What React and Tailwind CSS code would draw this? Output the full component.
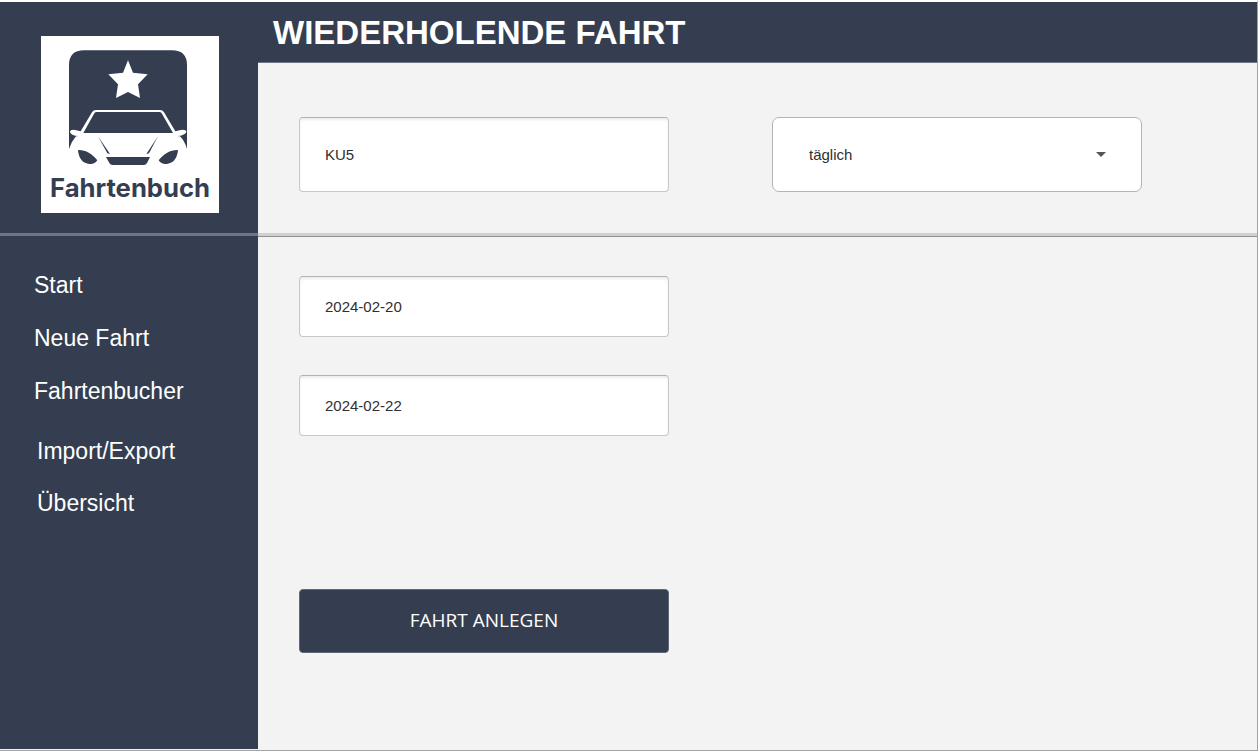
const mainLinks = ['Start', 'Neue Fahrt', 'Fahrtenbucher'];
const dataLinks = ['Import/Export', 'Übersicht'];

const fieldStyle =
  'block w-full rounded-[4px] border border-[#c8c8c8] border-t-[#b2b2b2] bg-white pl-[25px] pr-4 text-[15px] text-[#303030] shadow-[inset_0_2px_3px_rgba(0,0,0,0.08)] outline-none focus:border-[#343e50]';

function Logo() {
  return (
    <svg viewBox="33 33 534 531" className="block h-[177px] w-[178px] bg-white" role="img" aria-label="Fahrtenbuch">
      <path
        d="M117 372V121Q117 76 162 76H426Q471 76 471 121V372L467 360Q459 342 450 334H138Q124 350 117 372Z"
        fill="#343e50"
      />
      <path
        d="M294 106 309 143 353 148 324 178 330 219 294 201 258 219 264 178 235 148 279 143Z"
        fill="#fff"
      />
      <path
        d="M120 319Q122 313 135 315L152 319L186 262Q190 255 198 255H390Q398 255 402 262L436 319L452 315Q467 313 469 319Q469 328 452 332L443 333Q460 346 470 374L466 420H122L118 374Q127 346 145 333L136 332Q120 329 120 319Z"
        fill="#fff"
      />
      <path d="M160 324 193 265Q195 261 200 261H388Q393 261 395 265L429 324Z" fill="#343e50" />
      <path d="M204 334 240 387 232 385Z" fill="#343e50" />
      <path d="M384 334 349 387 357 385Z" fill="#343e50" />
      <path d="M228 396H360L351 414Q348 420 341 420H248Q241 420 238 414Z" fill="#343e50" />
      <path d="M144 375C166 374 186 385 202 406C195 417 185 418 174 416C156 413 146 398 144 375Z" fill="#343e50" />
      <path d="M444 375C422 374 402 385 386 406C393 417 403 418 414 416C432 413 442 398 444 375Z" fill="#343e50" />
      <text x="60" y="515" fontSize="77" fontFamily="Inter, sans-serif" fontWeight="700" fill="#343e50">
        Fahrtenbuch
      </text>
    </svg>
  );
}

function NavLink({ label }) {
  return (
    <li>
      <a href="#" className="block text-[23px] leading-7 text-white hover:underline">
        {label}
      </a>
    </li>
  );
}

export default function App() {
  return (
    <div className="flex min-h-screen border-r border-b border-t-2 border-t-white border-r-[#a3a3a3] border-b-[#a3a3a3] bg-[#f3f3f3] font-['Liberation_Sans',Arial,sans-serif]">
      <aside className="mb-px w-[258px] shrink-0 bg-[#343e50]">
        <div className="flex justify-center border-b-[3px] border-[#6e7588] pt-[34px] pb-5 pl-0.5">
          <Logo />
        </div>
        <nav className="pt-[35px]" aria-label="Hauptmenü">
          <ul className="flex flex-col gap-[25px] pl-[34px]">
            {mainLinks.map((label) => (
              <NavLink key={label} label={label} />
            ))}
          </ul>
          <ul className="mt-8 flex flex-col gap-6 pl-[37px]">
            {dataLinks.map((label) => (
              <NavLink key={label} label={label} />
            ))}
          </ul>
        </nav>
      </aside>

      <main className="min-w-0 flex-1">
        <header className="flex h-[61px] items-center border-b border-[#6e7588] bg-[#343e50] pt-0.5 pl-[15px]">
          <h1 className="text-[33px] font-bold text-white">WIEDERHOLENDE FAHRT</h1>
        </header>

        <form onSubmit={(event) => event.preventDefault()}>
          <div className="border-b border-[#919191]">
            <div className="grid grid-cols-2 gap-[103px] border-b-[3px] border-[#d0d0d0] pt-[54px] pr-[115px] pb-[41px] pl-[41px]">
              <input aria-label="Kennzeichen" defaultValue="KU5" className={`h-[75px] ${fieldStyle}`} />
              <div className="relative">
                <select
                  aria-label="Wiederholung"
                  defaultValue="täglich"
                  className="block h-[75px] w-full appearance-none rounded-[7px] border border-[#b4b4b4] bg-white px-9 pt-0.5 text-[15px] text-[#303030] outline-none focus:border-[#343e50]"
                >
                  <option>täglich</option>
                  <option>wöchentlich</option>
                  <option>monatlich</option>
                </select>
                <svg
                  viewBox="0 0 10 5"
                  className="pointer-events-none absolute top-[35px] right-9 h-[5px] w-[10px]"
                  aria-hidden="true"
                >
                  <path d="M0 0H10L5 5Z" fill="#555" />
                </svg>
              </div>
            </div>
          </div>

          <div className="grid grid-cols-2 gap-[103px] pt-[39px] pr-[115px] pb-24 pl-[41px]">
            <div className="flex flex-col">
              <input aria-label="Startdatum" defaultValue="2024-02-20" className={`h-[61px] ${fieldStyle}`} />
              <input aria-label="Enddatum" defaultValue="2024-02-22" className={`mt-[38px] h-[61px] ${fieldStyle}`} />
              <button
                type="submit"
                className="mt-[153px] h-16 w-full rounded-[4px] border border-[#5f6879] bg-[#343e50] pb-0.5 font-['Open_Sans',sans-serif] text-[19px] text-white hover:bg-[#3d485c]"
              >
                FAHRT ANLEGEN
              </button>
            </div>
          </div>
        </form>
      </main>
    </div>
  );
}
